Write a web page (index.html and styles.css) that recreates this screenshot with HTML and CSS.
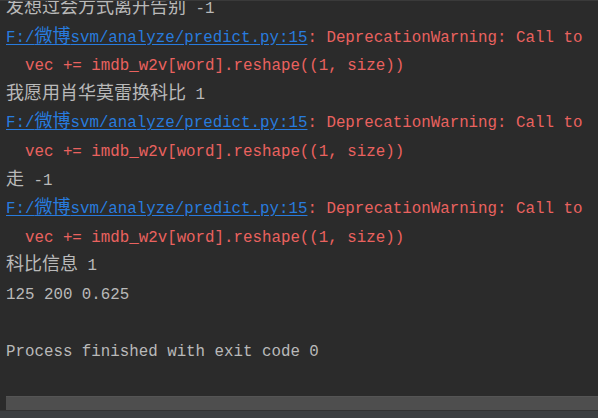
FILE: index.html
```html
<!DOCTYPE html>
<html>
<head>
<meta charset="utf-8">
<link rel="stylesheet" href="styles.css">
</head>
<body>
<div class="console">
  <div class="output">
    <div class="line out"><span class="cjk">发想过会方式离开告别</span> -1</div>
    <div class="line err"><span class="link">F:/<span class="cjk">微博</span>svm/analyze/predict.py:15</span>: DeprecationWarning: Call to</div>
    <div class="line err">  vec += imdb_w2v[word].reshape((1, size))</div>
    <div class="line out"><span class="cjk">我愿用肖华莫雷换科比</span> 1</div>
    <div class="line err"><span class="link">F:/<span class="cjk">微博</span>svm/analyze/predict.py:15</span>: DeprecationWarning: Call to</div>
    <div class="line err">  vec += imdb_w2v[word].reshape((1, size))</div>
    <div class="line out"><span class="cjk">走</span> -1</div>
    <div class="line err"><span class="link">F:/<span class="cjk">微博</span>svm/analyze/predict.py:15</span>: DeprecationWarning: Call to</div>
    <div class="line err">  vec += imdb_w2v[word].reshape((1, size))</div>
    <div class="line out"><span class="cjk">科比信息</span> 1</div>
    <div class="line out">125 200 0.625</div>
    <div class="line out"> </div>
    <div class="line out">Process finished with exit code 0</div>
  </div>
  <div class="hscroll"><div class="thumb"></div></div>
  <div class="footer"></div>
</div>
</body>
</html>
```
FILE: styles.css
```css
html, body {
  margin: 0;
  padding: 0;
  width: 598px;
  height: 418px;
  overflow: hidden;
  background: #2b2b2b;
}
.console {
  display: flex;
  flex-direction: column;
  height: 418px;
  border-top: 1px solid #3a3a3a;
  box-sizing: border-box;
}
.output {
  flex: 1;
  overflow: hidden;
  padding-left: 6px;
}
.output > .line:first-child {
  margin-top: -6px;
}
.line {
  height: 28.6px;
  line-height: 28.6px;
  white-space: pre;
  font-family: "Liberation Mono", "Noto Sans CJK SC", monospace;
  font-size: 15.8px;
}
.out { color: #b9b9b9; }
.err { color: #ea625f; }
.link {
  color: #287bde;
  text-decoration: underline;
  text-underline-offset: 2px;
}
.cjk {
  font-family: "Noto Sans CJK SC", sans-serif;
  font-size: 18px;
  line-height: 1;
}
.hscroll {
  height: 14px;
  padding-left: 6px;
  display: flex;
}
.thumb {
  flex: 1;
  background: #4e4e4e;
  border-top: 1px solid #555555;
}
.footer {
  height: 7px;
  background: #3c3f41;
  border-top: 1px solid #333333;
}
```
